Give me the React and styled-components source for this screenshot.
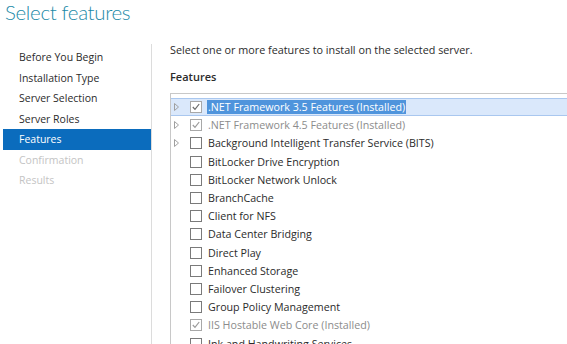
import React from "react";
import styled, { createGlobalStyle } from "styled-components";

const Global = createGlobalStyle`
  html, body { margin: 0; padding: 0; background: #fff; }
  body { overflow: hidden; font-family: "Open Sans", "Noto Sans", sans-serif; }
`;

const Page = styled.div`
  width: 567px;
  height: 344px;
  overflow: hidden;
  display: flex;
  flex-direction: column;
  background: #fff;
`;

const Title = styled.h1`
  margin: 0;
  padding: 0 0 0 5px;
  height: 44px;
  font-family: "Lato", "Open Sans", sans-serif;
  font-weight: 300;
  font-size: 20.5px;
  letter-spacing: -0.35px;
  line-height: 24px;
  color: #1c8aa8;
`;

const Body = styled.div`
  flex: 1;
  display: flex;
  min-height: 0;
`;

const Sidebar = styled.nav`
  width: 152px;
  flex: none;
  border-right: 1px solid #dcdcdc;
  padding-top: 3px;
  box-sizing: border-box;
`;

const NavItem = styled.div`
  height: 20.5px;
  line-height: 20.5px;
  margin-left: 3px;
  padding-left: 16px;
  font-size: 10.5px;
  color: ${(p) => (p.$active ? "#fff" : p.$disabled ? "#c4c4c4" : "#2b2b2b")};
  background: ${(p) => (p.$active ? "#0b6cbd" : "transparent")};
  white-space: nowrap;
`;

const Content = styled.div`
  flex: 1;
  padding-left: 18px;
  min-width: 0;
`;

const Intro = styled.div`
  font-size: 10.8px;
  color: #2b2b2b;
  height: 12px;
  line-height: 12px;
`;

const Label = styled.div`
  font-size: 11px;
  font-weight: 600;
  color: #2b2b2b;
  margin-top: 15px;
  height: 12px;
  line-height: 12px;
`;

const ListBox = styled.div`
  margin-top: 10px;
  border-top: 1px solid #c8c8c8;
  border-left: 1px solid #c8c8c8;
  padding-top: 4px;
`;

const Row = styled.div`
  height: 18.2px;
  display: flex;
  align-items: center;
  box-sizing: border-box;
  font-size: 10.7px;
  white-space: nowrap;
  color: ${(p) => (p.$muted ? "#8c8c8c" : "#2b2b2b")};
  background: ${(p) => (p.$selected ? "#dae8fb" : "transparent")};
  border-top: 1px solid ${(p) => (p.$selected ? "#a9c7ef" : "transparent")};
  border-bottom: 1px solid ${(p) => (p.$selected ? "#a9c7ef" : "transparent")};
`;

const Expander = styled.span`
  width: 19px;
  flex: none;
  display: flex;
  align-items: center;
  padding-left: 3px;
  box-sizing: border-box;
`;

const Box = styled.span`
  width: 12px;
  height: 12px;
  flex: none;
  box-sizing: border-box;
  border: 1px solid ${(p) => (p.$muted ? "#a8a8a8" : "#7a7a7a")};
  background: #fff;
  display: flex;
  align-items: center;
  justify-content: center;
  margin-right: 5px;
`;

const Text = styled.span`
  padding: 0 1px;
  line-height: 14px;
  background: ${(p) => (p.$hl ? "#4f94dc" : "transparent")};
  color: ${(p) => (p.$hl ? "#fff" : "inherit")};
`;

const Triangle = () => (
  <svg width="5" height="8" viewBox="0 0 5 8">
    <path d="M0.5 0.5 L4.5 4 L0.5 7.5 Z" fill="none" stroke="#a0a0a0" strokeWidth="1" />
  </svg>
);

const Check = ({ color }) => (
  <svg width="10" height="10" viewBox="0 0 10 10">
    <path d="M1.8 5 L4 7.4 L8.2 2" fill="none" stroke={color} strokeWidth="1.2" />
  </svg>
);

const nav = [
  { t: "Before You Begin" },
  { t: "Installation Type" },
  { t: "Server Selection" },
  { t: "Server Roles" },
  { t: "Features", active: true },
  { t: "Confirmation", disabled: true },
  { t: "Results", disabled: true },
];

const features = [
  { t: ".NET Framework 3.5 Features (Installed)", exp: true, checked: true, selected: true },
  { t: ".NET Framework 4.5 Features (Installed)", exp: true, checked: true, muted: true },
  { t: "Background Intelligent Transfer Service (BITS)", exp: true },
  { t: "BitLocker Drive Encryption" },
  { t: "BitLocker Network Unlock" },
  { t: "BranchCache" },
  { t: "Client for NFS" },
  { t: "Data Center Bridging" },
  { t: "Direct Play" },
  { t: "Enhanced Storage" },
  { t: "Failover Clustering" },
  { t: "Group Policy Management" },
  { t: "IIS Hostable Web Core (Installed)", checked: true, muted: true },
  { t: "Ink and Handwriting Services" },
];

export default function App() {
  return (
    <>
      <Global />
      <Page>
        <Title>Select features</Title>
        <Body>
          <Sidebar>
            {nav.map((n) => (
              <NavItem key={n.t} $active={n.active} $disabled={n.disabled}>
                {n.t}
              </NavItem>
            ))}
          </Sidebar>
          <Content>
            <Intro>Select one or more features to install on the selected server.</Intro>
            <Label>Features</Label>
            <ListBox>
              {features.map((f) => (
                <Row key={f.t} $selected={f.selected} $muted={f.muted}>
                  <Expander>{f.exp && <Triangle />}</Expander>
                  <Box $muted={f.checked}>
                    {f.checked && <Check color={f.selected ? "#6a6a6a" : "#9a9a9a"} />}
                  </Box>
                  <Text $hl={f.selected}>{f.t}</Text>
                </Row>
              ))}
            </ListBox>
          </Content>
        </Body>
      </Page>
    </>
  );
}
